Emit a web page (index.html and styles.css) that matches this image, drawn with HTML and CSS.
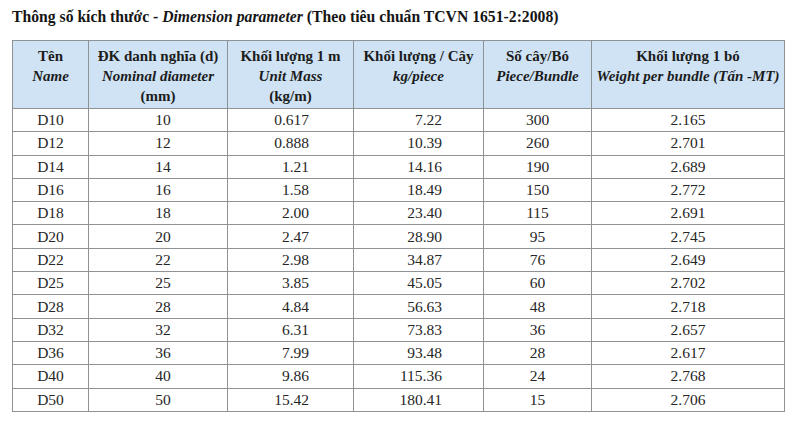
FILE: index.html
```html
<!DOCTYPE html>
<html lang="vi">
<head>
<meta charset="utf-8">
<title>Thông số kích thước</title>
<link rel="stylesheet" href="styles.css">
</head>
<body>
<div class="page">
  <h1 class="title">Thông số kích thước - <em>Dimension parameter</em> (Theo tiêu chuẩn TCVN 1651-2:2008)</h1>
  <table class="spec">
    <colgroup>
      <col class="c1"><col class="c2"><col class="c3"><col class="c4"><col class="c5"><col class="c6">
    </colgroup>
    <thead>
      <tr>
        <th>Tên<br><em>Name</em></th>
        <th>ĐK danh nghĩa (d)<br><em>Nominal diameter</em><br>(mm)</th>
        <th>Khối lượng 1 m<br><em>Unit Mass</em><br>(kg/m)</th>
        <th>Khối lượng / Cây<br><em>kg/piece</em></th>
        <th>Số cây/Bó<br><em>Piece/Bundle</em></th>
        <th>Khối lượng 1 bó<br><em>Weight per bundle (Tấn -MT)</em></th>
      </tr>
    </thead>
    <tbody>
      <tr><td>D10</td><td class="dk">10</td><td class="m">0.617</td><td class="p">7.22</td><td>300</td><td>2.165</td></tr>
      <tr><td>D12</td><td class="dk">12</td><td class="m">0.888</td><td class="p">10.39</td><td>260</td><td>2.701</td></tr>
      <tr><td>D14</td><td class="dk">14</td><td class="m">1.21</td><td class="p">14.16</td><td>190</td><td>2.689</td></tr>
      <tr><td>D16</td><td class="dk">16</td><td class="m">1.58</td><td class="p">18.49</td><td>150</td><td>2.772</td></tr>
      <tr><td>D18</td><td class="dk">18</td><td class="m">2.00</td><td class="p">23.40</td><td>115</td><td>2.691</td></tr>
      <tr><td>D20</td><td class="dk">20</td><td class="m">2.47</td><td class="p">28.90</td><td>95</td><td>2.745</td></tr>
      <tr><td>D22</td><td class="dk">22</td><td class="m">2.98</td><td class="p">34.87</td><td>76</td><td>2.649</td></tr>
      <tr><td>D25</td><td class="dk">25</td><td class="m">3.85</td><td class="p">45.05</td><td>60</td><td>2.702</td></tr>
      <tr><td>D28</td><td class="dk">28</td><td class="m">4.84</td><td class="p">56.63</td><td>48</td><td>2.718</td></tr>
      <tr><td>D32</td><td class="dk">32</td><td class="m">6.31</td><td class="p">73.83</td><td>36</td><td>2.657</td></tr>
      <tr><td>D36</td><td class="dk">36</td><td class="m">7.99</td><td class="p">93.48</td><td>28</td><td>2.617</td></tr>
      <tr><td>D40</td><td class="dk">40</td><td class="m">9.86</td><td class="p">115.36</td><td>24</td><td>2.768</td></tr>
      <tr><td>D50</td><td class="dk">50</td><td class="m">15.42</td><td class="p">180.41</td><td>15</td><td>2.706</td></tr>
    </tbody>
  </table>
</div>
</body>
</html>
```
FILE: styles.css
```css
html, body {
  margin: 0;
  padding: 0;
  background: #ffffff;
}
.page {
  padding: 7px 16px 0 12px;
  font-family: "Liberation Serif", "Times New Roman", serif;
  color: #1f1f1f;
}
.title {
  margin: 0 0 13px 0;
  font-family: "Liberation Serif", "Times New Roman", serif;
  font-size: 15.7px;
  line-height: 20px;
  font-weight: bold;
  color: #151515;
}
.spec {
  width: 772px;
  border-collapse: collapse;
  table-layout: fixed;
  font-family: "Liberation Serif", "Times New Roman", serif;
  font-size: 15.5px;
}
.c1 { width: 76px; }
.c2 { width: 139px; }
.c3 { width: 126px; }
.c4 { width: 130px; }
.c5 { width: 108px; }
.c6 { width: 193px; }
.spec th, .spec td {
  border: 1px solid #8f9396;
  text-align: center;
  padding: 0;
}
.spec th {
  background: #cfe3f4;
  font-weight: bold;
  font-size: 15px;
  line-height: 20px;
  height: 68px;
  vertical-align: top;
  padding-top: 5px;
  box-sizing: border-box;
  color: #1c1c1c;
}
.spec td {
  height: 23.3px;
  line-height: 20px;
  box-sizing: border-box;
  color: #262626;
}
.spec td.dk { padding-left: 10px; }
.spec td.m { text-align: right; padding-right: 44px; }
.spec td.p { text-align: right; padding-right: 41px; }
```
